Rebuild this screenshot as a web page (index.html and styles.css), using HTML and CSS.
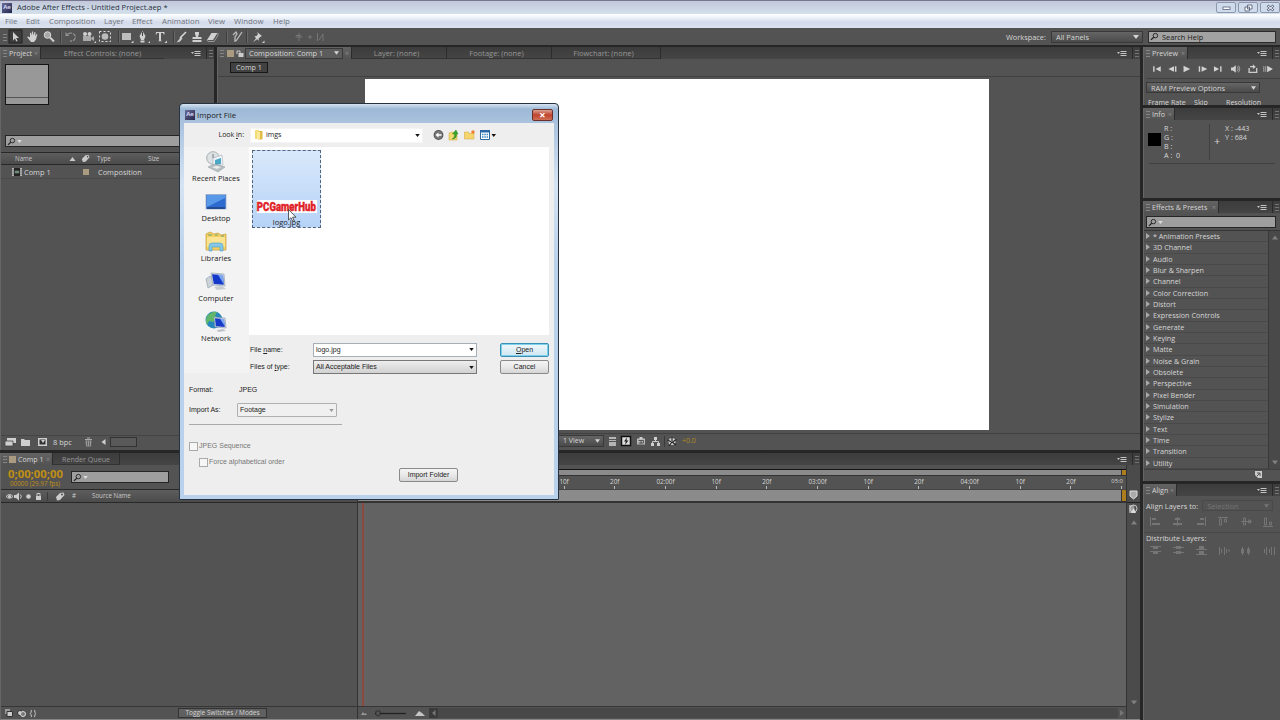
FILE: index.html
```
<!DOCTYPE html>
<html lang="en">
<head>
    <meta charset="UTF-8">
    <meta name="viewport" content="width=device-width, initial-scale=1.0">
    <title>Adobe After Effects - Untitled Project.aep *</title>
    <link rel="stylesheet" href="styles.css">
</head>
<body>
    <svg class="sprite" width="0" height="0">
        <symbol id="i-menu" viewBox="0 0 10 7"><path d="M0 2h3L1.500 4z"/><path d="M3.500 1.500h6M3.500 3.500h6M3.500 5.500h6" stroke="currentColor" stroke-width="1"/></symbol>
        <symbol id="i-search" viewBox="0 0 10 9"><circle cx="6" cy="3.500" r="2.500" fill="none" stroke="currentColor"/><path d="M4.200 5.300L1 8.300" stroke="currentColor" stroke-width="1.300"/></symbol>
        <symbol id="i-down" viewBox="0 0 6 4"><path d="M0 0h6L3 4z"/></symbol>
        <symbol id="i-up" viewBox="0 0 6 4"><path d="M0 4h6L3 0z"/></symbol>
        <symbol id="i-tag" viewBox="0 0 10 9"><path d="M1 5l4-4 3.500-.5L9.500 3 5 8 2 8.500z"/><circle cx="7.300" cy="2.500" r=".9" fill="#444"/></symbol>
        <symbol id="i-comp" viewBox="0 0 11 9"><path d="M0 0h11v9H0z" fill="#cfcfcf"/><path d="M2 0h7v9H2z" fill="#222"/><path d="M3 3h5v3H3z" fill="#6d8a78"/><path d="M1 1v7M10 1v7" stroke="#333" stroke-dasharray="1 1"/></symbol>
    </svg>

    <div class="titlebar">
        <span class="ae-icon">Ae</span>
        <span class="title">Adobe After Effects - Untitled Project.aep *</span>
        <div class="win-btns">
            <span><svg width="9" height="8" viewBox="0 0 9 8"><rect x="1" y="3" width="7" height="2.500" fill="#fff" stroke="#66708a" stroke-width=".9"/></svg></span>
            <span><svg width="9" height="8" viewBox="0 0 9 8"><path d="M3.500 1h4.500v4H3.500zM1 3h4.500v4H1z" fill="#fff" stroke="#66708a"/></svg></span>
            <span><svg width="9" height="8" viewBox="0 0 9 8"><path d="M1.500 1.500l6 5M7.500 1.500l-6 5" stroke="#66708a" stroke-width="2.600"/><path d="M2 2l5 4M7 2L2 6" stroke="#fff" stroke-width="1"/></svg></span>
        </div>
    </div>
    <div class="menubar">
        <span class="m-file">File</span><span class="m-edit">Edit</span><span class="m-comp">Composition</span><span class="m-layer">Layer</span><span class="m-effect">Effect</span><span class="m-anim">Animation</span><span class="m-view">View</span><span class="m-window">Window</span><span>Help</span>
    </div>

    <div class="toolbar">
        <i class="grip"></i>
        <svg class="tools" width="330" height="16" viewBox="0 0 330 16" fill="#d0d0d0">
            <rect x="1" y="1" width="13" height="13" fill="#3c3c3c" stroke="#232323"/>
            <path d="M5 3v8.500l2-2 1.300 3 1.200-.5-1.300-3H11z"/>
            <path d="M19 8l1.500-.5 1.500 1V4l1-.3.500 3L24 2.500h1l.3 4L26.500 3l1 .3-.3 4L28.500 5l.9.500-1.400 5L26 13h-3z"/>
            <circle cx="39.500" cy="6" r="3.300" fill="#a8a8a8" stroke="#d8d8d8"/><path d="M42 8.500l4 4" stroke="#d0d0d0" stroke-width="2"/>
            <path d="M52.500 2v12" stroke="#3d3d3d"/><path d="M53.500 2v12" stroke="#686868"/>
            <path d="M60 5a4.500 4 0 1 1 2 7" fill="none" stroke="#929292" stroke-width="1.300" stroke-dasharray="4 1"/><path d="M57.500 3v4h4z" fill="#929292"/>
            <path d="M75 7h8v5h-8zM83 9l3-2v5l-3-2z" fill="#aaa"/><circle cx="77" cy="5" r="2"/><circle cx="81.500" cy="5" r="2"/><path d="M86 14h2v-2z"/>
            <circle cx="97" cy="7.500" r="3.300" fill="#bbb"/><rect x="91.500" y="2.500" width="11" height="10" fill="none" stroke="#ddd" stroke-dasharray="2 2"/>
            <path d="M110.500 2v12" stroke="#3d3d3d"/><path d="M111.500 2v12" stroke="#686868"/>
            <path d="M114 4h9v7h-9z" fill="#bdbdbd"/><path d="M123 14h2.500v-2.500z"/>
            <path d="M134.500 2l3 5-1.500 4h-3l-1.500-4zM132.500 11.500h4v2h-4z"/><path d="M134.500 3v4" stroke="#444"/><path d="M140 14h2v-2z"/>
            <path d="M148 3h8.500v2.500h-.8L155 4h-2v7.500l1 .8h-4l1-.8V4h-2l-.5 1.500h-.8z"/><path d="M156.500 14h2.500v-2.500z"/>
            <path d="M165.500 2v12" stroke="#3d3d3d"/><path d="M166.500 2v12" stroke="#686868"/>
            <path d="M178 3l-6 6" stroke="#d8d8d8" stroke-width="1.600"/><path d="M173 8l1.500 1.500-2.500 3-3.500 1z"/>
            <path d="M187 3h4v2l-1 3h3.500v2h-9V8h3.500l-1-3zM184.500 11h9v2h-9z"/>
            <path d="M203.500 4h6l-4.500 7h-6z"/><path d="M199 11l1 1.500h6l4-6V4" fill="none" stroke="#999"/>
            <path d="M218.500 2v12" stroke="#3d3d3d"/><path d="M219.500 2v12" stroke="#686868"/>
            <path d="M234 3l-6 9M225 6l3-3 1 2-2 3v5" stroke="#bdbdbd" stroke-width="1.300" fill="none"/>
            <path d="M238.500 2v12" stroke="#3d3d3d"/><path d="M239.500 2v12" stroke="#686868"/>
            <path d="M249 3l5 4-1.500.7-2 2 .5 2-2-1.500-4 3 3-4-1.500-2 2-.2 1.500-2z"/><path d="M254 14h2.500v-2.500z"/>
            <g fill="none" stroke="#777"><path d="M291 4v8M287.500 8h7M288 6.500h5"/><path d="M300 8h4M302 6v4"/><path d="M309.500 4v8M311 11l4-6v7"/></g>
        </svg>
        <span class="ws-label">Workspace:</span>
        <span class="select ws-select">All Panels<svg width="6" height="4"><use href="#i-down"/></svg></span>
        <span class="search-help"><svg width="9" height="9"><use href="#i-search"/></svg>Search Help</span>
    </div>

    <div class="workspace">
        <div class="main">
            <div class="upper">
                <div class="panel project">
                    <div class="tabs">
                        <span class="tab active w-project"><i class="grip"></i>Project<b>×</b></span>
                        <span class="tab dim effect-controls">Effect Controls: (none)</span>
                        <svg class="pmenu" width="10" height="7"><use href="#i-menu"/></svg><i class="end"></i>
                    </div>
                    <div class="thumb"></div>
                    <div class="field project-search"><svg width="9" height="9"><use href="#i-search"/></svg><svg class="lt" width="5" height="3"><use href="#i-down"/></svg></div>
                    <div class="colhead">
                        <span class="c-name">Name</span><svg width="7" height="4"><use href="#i-up"/></svg><svg class="tag" width="9" height="9"><use href="#i-tag"/></svg><span class="c-type">Type</span><span>Size</span>
                    </div>
                    <div class="item">
                        <svg width="10" height="8"><use href="#i-comp"/></svg><span class="c-comp">Comp 1</span><i class="swatch"></i><span>Composition</span>
                    </div>
                    <div class="project-foot">
                        <svg width="110" height="12" viewBox="0 0 110 12" fill="#cfcfcf">
                            <path d="M6 2h9v5H6z"/><path d="M4 5h8v5H4z" stroke="#444" stroke-width=".8"/><path d="M20 3h3l1 1h5v6h-9z"/>
                            <path d="M37 2h9v8h-9z"/><path d="M38.500 3.500h6v5h-6z" fill="#333"/><path d="M40 4l2 3 2-3z"/>
                            <path d="M84 3.500h7M86 2h3" stroke="#aaa"/><path d="M84.500 4.500h6l-.6 6h-4.800z" fill="#999"/><path d="M86.500 5v5M88.500 5v5" stroke="#555" stroke-width=".7"/>
                            <path d="M104.500 3v6L100.500 6z"/>
                        </svg>
                        <span class="bpc">8 bpc</span><i class="thumb-bar"></i>
                    </div>
                </div>

                <div class="panel comp">
                    <div class="tabs">
                        <span class="tab active w-comp"><i class="grip"></i><i class="swatch"></i><svg width="8" height="9" viewBox="0 0 8 9"><path d="M2.500 4h5v4h-5z" fill="#ccc"/><path d="M1 5V2h3v2" fill="none" stroke="#ccc"/></svg><span class="comp-name">Composition: Comp 1<svg width="5" height="4"><use href="#i-down"/></svg></span><b>×</b></span>
                        <span class="tab dim w-layer">Layer: (none)</span>
                        <span class="tab dim w-footage">Footage: (none)</span>
                        <span class="tab dim w-flow">Flowchart: (none)</span>
                        <svg class="pmenu" width="10" height="7"><use href="#i-menu"/></svg><i class="end"></i>
                    </div>
                    <div class="crumbs"><span>Comp 1</span></div>
                    <div class="viewer"><div class="canvas"></div></div>
                    <div class="comp-foot">
                        <span class="select views">1 View<svg width="5" height="4"><use href="#i-down"/></svg></span>
                        <svg width="78" height="13" viewBox="0 0 78 13" fill="#cfcfcf">
                            <path d="M5 2h7v2H5zM5 5h7v1H5zM5 7h7v4H5z" fill="#b5b5b5"/>
                            <rect x="17.500" y="1.500" width="9" height="9" fill="#ddd" stroke="#111" stroke-width="1.500"/><path d="M23 2.500L20 6.500h1.800L21 10l3.500-4.500h-2z" fill="#222"/>
                            <path d="M33 3.500h8v6h-8z" fill="#bbb"/><path d="M35.500 2h3v2h-3z"/><path d="M34.500 5.500h5v2.500h-5M37 5v4" stroke="#555" fill="none"/>
                            <path d="M50 2h3v3h-3zM47 8h3v3h-3zM53 8h3v3h-3z"/><path d="M51.500 5v2M48.500 8V6.500h6V8" stroke="#ccc" fill="none"/>
                            <path d="M60.500 1v11" stroke="#3a3a3a"/>
                            <circle cx="68" cy="6.500" r="3.500"/><path d="M68 2v4M72.500 4.500L68.500 7M72 10l-4-3M65 11l3-4M63.500 5l4 2" stroke="#222" stroke-width="1.100"/>
                        </svg>
                        <span class="exposure">+0.0</span>
                    </div>
                </div>
            </div>

            <div class="panel timeline">
                <div class="tabs">
                    <span class="tab active w-tl"><i class="grip"></i><i class="swatch"></i>Comp 1<b>×</b></span>
                    <span class="tab dim w-rq">Render Queue</span>
                    <svg class="pmenu" width="10" height="7"><use href="#i-menu"/></svg><i class="end"></i>
                </div>
                <div class="tl-body">
                    <div class="tl-left">
                        <div class="tl-top">
                            <div class="timecode"><b>0;00;00;00</b><span>00000 (29.97 fps)</span></div>
                            <div class="field tl-search"><svg width="9" height="9"><use href="#i-search"/></svg><svg class="lt" width="5" height="3"><use href="#i-down"/></svg></div>
                        </div>
                        <div class="colhead tl-head">
                            <svg width="78" height="11" viewBox="0 0 78 11" fill="#ccc">
                                <path d="M5 5.500q3.500-4 7 0q-3.500 3.500-7 0" stroke="#ccc" fill="none"/><circle cx="8.500" cy="5.500" r="1.600"/>
                                <path d="M13 4h2l3-2.500v8L15 7h-2z"/><path d="M19.500 3.500q1.500 2 0 4" stroke="#ccc" fill="none"/>
                                <circle cx="27.500" cy="5.500" r="2.300"/><path d="M35 5h5v4h-5z"/><path d="M36 5V2.500h3V5" stroke="#ccc" fill="none"/>
                                <path d="M46.500 1v9" stroke="#3b3b3b"/><path d="M55 6l4-4 3.500-.5L63.500 4 59 9l-3 .5z"/><circle cx="61" cy="3.500" r=".9" fill="#444"/>
                            </svg>
                            <span class="c-num">#</span><span>Source Name</span>
                        </div>
                        <div class="tl-layers"></div>
                        <div class="tl-lfoot">
                            <svg width="40" height="11" viewBox="0 0 40 11" fill="#ccc"><path d="M4 1h5v5H4z" fill="#999"/><path d="M6 3.500h5.500v5H6z" stroke="#333"/><circle cx="19" cy="5" r="2.500" fill="#ccc" stroke="#333"/><circle cx="22" cy="6" r="2.500" fill="#777" stroke="#ddd"/><path d="M31 2q-1 0-1 2.500l-.7 1 .7 1q0 2.500 1 2.500M33 2q1 0 1 2.500l.7 1-.7 1q0 2.500-1 2.500" fill="none" stroke="#ccc"/></svg>
                            <span class="toggle">Toggle Switches / Modes</span>
                        </div>
                    </div>
                    <div class="tl-right">
                        <div class="nav-bar"><i></i></div>
                        <div class="ruler"><span>0:00f</span><span>10f</span><span>20f</span><span>01:00f</span><span>10f</span><span>20f</span><span>02:00f</span><span>10f</span><span>20f</span><span>03:00f</span><span>10f</span><span>20f</span><span>04:00f</span><span>10f</span><span>20f</span><span class="last">05:0</span></div>
                        <div class="work-bar"><i></i></div>
                        <div class="tracks"><i class="playhead"></i></div>
                        <div class="tl-rfoot">
                            <svg width="80" height="10" viewBox="0 0 80 10" fill="#c5c5c5"><path d="M3 7l2-3 1.500 2L7.500 5l1.500 2z" fill="#999"/><path d="M17 5.500h31" stroke="#222" stroke-width="1.300"/><path d="M18 3h4v4l-2 1-2-1z" fill="#555" stroke="#222" stroke-width=".7"/><path d="M57 8l4-5 3 2 3 3z"/><path d="M71 0v10h9V0z" fill="#3b3b3b"/><path d="M77.500 2v6L74 5z" fill="#777"/></svg>
                            <i></i>
                            <svg width="8" height="10" viewBox="0 0 8 10"><path d="M2 2v6l4-3z" fill="#777"/></svg>
                        </div>
                    </div>
                    <div class="tl-scroll">
                        <svg width="13" height="55" viewBox="0 0 13 55"><path d="M3 26h7v5l-3.500 3L3 31z" fill="#aaa" stroke="#ddd"/><path d="M0 37.500h13" stroke="#222"/><path d="M2 40h5l1 8H2z" fill="#999"/><circle cx="6.500" cy="43.500" r="3.500" fill="none" stroke="#ccc"/><path d="M4 48l2.500-5L9 48z" fill="#ddd"/></svg>
                        <svg class="gray" width="6" height="5"><use href="#i-up"/></svg>
                        <svg class="gray bottom" width="6" height="5"><use href="#i-down"/></svg>
                    </div>
                </div>
            </div>
        </div>

        <div class="side">
            <div class="panel preview">
                <div class="tabs"><span class="tab active w-prev"><i class="grip"></i>Preview<b>×</b></span><svg class="pmenu" width="10" height="7"><use href="#i-menu"/></svg><i class="end"></i></div>
                <svg class="transport" width="134" height="20" viewBox="0 0 134 20" fill="#d2d2d2">
                    <path d="M4 7.500h1.500v6H4zM12 7.500v6l-5.500-3zM26 7.500v6l-6-3zM27 7.500h1.500v6H27zM36 7v7l7-3.500zM52 7.500h1.500v6H52zM55 7.500v6l6-3zM68 7.500v6l5.500-3zM74.500 7.500H76v6h-1.500z"/>
                    <path d="M86 9h2l3-2.500v8L88 12h-2z"/><path d="M92.500 8q2 2.500 0 5M94 7q2.500 3.500 0 7" stroke="#bbb" fill="none" stroke-width=".8"/>
                    <path d="M105 9.500V14h8V9.500M106 8h4" fill="none" stroke="#ccc" stroke-width="1.400"/><path d="M109 5.500l3 3-3 2z"/>
                    <path d="M120.500 7.500v6M122.500 7.500v6" stroke="#aaa"/><path d="M124 7v7l6-3.500z"/>
                </svg>
                <div class="select ram">RAM Preview Options<svg width="5" height="4"><use href="#i-down"/></svg></div>
                <div class="cut"><span class="c-rate">Frame Rate</span><span class="c-skip">Skip</span><span>Resolution</span></div>
            </div>
            <div class="panel info">
                <div class="tabs"><span class="tab active w-info"><i class="grip"></i>Info<b>×</b></span><svg class="pmenu" width="10" height="7"><use href="#i-menu"/></svg><i class="end"></i></div>
                <div class="info-body">
                    <i class="black"></i>
                    <div class="rgba"><span>R :</span><span>G :</span><span>B :</span><span>A :&nbsp; 0</span></div>
                    <div class="cross">+</div>
                    <div class="xy"><span>X : -443</span><span>Y : 684</span></div>
                </div>
            </div>
            <div class="panel effects">
                <div class="tabs"><span class="tab active w-fx"><i class="grip"></i>Effects &amp; Presets<b>×</b></span><svg class="pmenu" width="10" height="7"><use href="#i-menu"/></svg><i class="end"></i></div>
                <div class="field fx-search"><svg width="9" height="9"><use href="#i-search"/></svg><svg class="lt" width="5" height="3"><use href="#i-down"/></svg></div>
                <div class="fx-body">
                    <ul>
                        <li>* Animation Presets</li><li>3D Channel</li><li>Audio</li><li>Blur &amp; Sharpen</li><li>Channel</li><li>Color Correction</li><li>Distort</li><li>Expression Controls</li><li>Generate</li><li>Keying</li><li>Matte</li><li>Noise &amp; Grain</li><li>Obsolete</li><li>Perspective</li><li>Pixel Bender</li><li>Simulation</li><li>Stylize</li><li>Text</li><li>Time</li><li>Transition</li><li>Utility</li>
                    </ul>
                    <div class="fx-scroll"><svg class="gray" width="6" height="5"><use href="#i-up"/></svg><svg class="gray" width="6" height="5"><use href="#i-down"/></svg></div>
                </div>
                <div class="fx-foot"><svg width="7" height="7" viewBox="0 0 7 7"><path d="M0 0h7v7H3L0 4z" fill="#ccc"/><path d="M2 2h3v3M5 2L2 5" stroke="#555" fill="none"/></svg></div>
            </div>
            <div class="panel align">
                <div class="tabs"><span class="tab active w-align"><i class="grip"></i>Align<b>×</b></span><svg class="pmenu" width="10" height="7"><use href="#i-menu"/></svg><i class="end"></i></div>
                <div class="align-row"><span>Align Layers to:</span><span class="select sel">Selection<svg width="5" height="4"><use href="#i-down"/></svg></span></div>
                <svg width="134" height="20" viewBox="0 0 134 20" fill="#757575" stroke="#757575">
                    <path d="M6.500 5v9M33.500 5v9M61.500 5v9M74 5.500h10M97 9.500h11M119 14.500h10" fill="none"/>
                    <path d="M8 6h4v2H8zM8 11h8v2H8zM31 6h5v2h-5zM29 11h9v2h-9zM56 6h4v2h-4zM53 11h7v2h-7z" stroke="none"/>
                    <path d="M75.500 7v6h2V7zM80.500 7v3h2V7zM99.500 6v7h2V6zM104.500 8v3h2V8zM120.500 6v7h2V6zM125.500 10v3h2v-3z" fill="none"/>
                </svg>
                <div class="align-row dist"><span>Distribute Layers:</span></div>
                <svg width="134" height="16" viewBox="0 0 134 16" fill="#757575" stroke="#757575">
                    <path d="M6 3.500h11M6 8.500h11M29 4.500h11M29 9.500h11M52 6.500h11M52 11.500h11"/>
                    <path d="M9 4h5v2H9zM9 9h5v2H9zM32 3h5v3h-5zM32 8h5v3h-5zM55 3h5v3h-5zM55 8h5v3h-5z" stroke="none"/>
                    <path d="M75.500 4v8M80.500 4v8M77.500 6v4M82.500 6v4M85 6v3M98.500 4v8M97.500 6h2v4h-2zM104.500 4v8M103.500 6h2v4h-2zM122.500 4v8M127.500 4v8M120.500 6v4M125.500 6v4M130.500 4v8" fill="none"/>
                </svg>
            </div>
        </div>
    </div>

    <div class="dialog">
        <div class="dlg-title"><span class="ae-icon">Ae</span><span>Import File</span><b class="close">×</b></div>
        <div class="dlg-body">
            <div class="lookin">
                <label>Look <u>i</u>n:</label>
                <div class="combo look-combo"><svg width="9" height="10" viewBox="0 0 9 10"><path d="M1 0h4v9H1z" fill="#f4dd79"/><path d="M4 1h4.500v8.500H4z" fill="#e3bc45"/><path d="M3 1l3 1v8L3 9z" fill="#fae998"/></svg>imgs<svg class="arrow" width="5" height="3"><use href="#i-down"/></svg></div>
                <svg width="70" height="14" viewBox="0 0 70 14">
                    <circle cx="10.500" cy="7" r="4.900" fill="#555"/><circle cx="10.500" cy="7" r="3.900" fill="#777"/><path d="M13.500 6.200v1.600h-3v1.700L7.500 7l3-2.500v1.700z" fill="#fff"/>
                    <path d="M21 5l3-1 5 1v7h-8z" fill="#f2d872" stroke="#c9a437" stroke-width=".5"/><path d="M24 11q3-1 2.500-5h-2L28 2l2 4h-1.500q.5 5-4.500 5" fill="#36a52b" stroke="#1d7a1c" stroke-width=".4"/>
                    <path d="M36.500 4h4l1 1.500h4.500V11h-9.500z" fill="#f6d56e" stroke="#cfa43b" stroke-width=".5"/><circle cx="45" cy="4" r="1.800" fill="#ef8335"/>
                    <path d="M52.500 2.500h9v9h-9z" fill="#fff" stroke="#2b6aa0"/><path d="M52 2h10v2.500H52z" fill="#2867a8"/><path d="M54 6.500h6M54 9h6" stroke="#3586c4" stroke-width="1.500" stroke-dasharray="1.500 .8"/><path d="M63.500 6h4.500L65.700 9z" fill="#111"/>
                </svg>
            </div>
            <div class="browse">
                <div class="places">
                    <div><svg width="24" height="23" viewBox="0 0 24 23"><circle cx="9" cy="8" r="6.300" fill="#dde2e4" stroke="#a9b0b3"/><path d="M9 4v4h3" fill="none" stroke="#777"/><path d="M9 8l9-3 1 10H9z" fill="#eef6fa" stroke="#aab" stroke-width=".6"/><path d="M11 10l6-2v6l-6 1z" fill="#4ba7c6"/><path d="M4 17l7-3 10 3-7 5z" fill="#b9c0c4" stroke="#899" stroke-width=".5"/><path d="M8 17l5-1 4 1-4 2z" fill="#eee"/></svg>Recent Places</div>
                    <div><svg width="24" height="23" viewBox="0 0 24 23"><rect x="2" y="4.500" width="20" height="14.500" fill="#2d6bd0" stroke="#9eb0c8" stroke-width=".8"/><path d="M3 5h18v3L3 17z" fill="#5898e8"/><path d="M3 17h18v2H3z" fill="#244b93"/></svg>Desktop</div>
                    <div><svg width="24" height="23" viewBox="0 0 24 23"><path d="M2 4l4-2 4 2 4-1 3 2 5-1v16H2z" fill="#f2cf65" stroke="#c79d33" stroke-width=".7"/><path d="M3 7h18v10H3z" fill="#fae493"/><path d="M4 5h4M11 5h3M17 6h3" stroke="#6ca36d"/><path d="M5 21v-5q0-3 3-3h8q3 0 3 3v5h-3v-4H8v4z" fill="#85c8e4" stroke="#4ba0c9" stroke-width=".6"/></svg>Libraries</div>
                    <div><svg width="24" height="23" viewBox="0 0 24 23"><path d="M2 9l4-3 5 8-7 4z" fill="#cbd2d8" stroke="#8c98a2" stroke-width=".6"/><path d="M7 3l13 1 1 12-12-1z" fill="#dfe6ed" stroke="#8793a0" stroke-width=".6"/><path d="M8 4.200l11 .9.8 9.700-10-.8z" fill="#1438ca"/><path d="M14 4.700l5 .4.600 9z" fill="#7aa7ef"/><path d="M10 17l8-1 4 3-9 1z" fill="#c6cdd3"/></svg>Computer</div>
                    <div><svg width="24" height="23" viewBox="0 0 24 23"><circle cx="10" cy="10" r="8.500" fill="#2688bd"/><path d="M3 6q5-5 10-4l-2 4 2 2-4 4-4-1-2 4q-2-4 0-9" fill="#61b66c"/><path d="M10 7l11 1 1 10-11-1z" fill="#dde7ee" stroke="#8190a0" stroke-width=".6"/><path d="M11 8.200l9 .8.800 8-9-.8z" fill="#163bc8"/><path d="M16 8.700l4 .3.600 7z" fill="#83aaee"/><path d="M13 20l6-1 3 2-8 1z" fill="#bcc4cb"/></svg>Network</div>
                </div>
                <div class="right-col">
                    <div class="files">
                        <div class="file"><span class="logo"><b>PCGamerHub</b></span><span>logo.jpg</span></div>
                    </div>
                    <div class="frow"><label>File <u>n</u>ame:</label><div class="combo name-combo">logo.jpg<svg class="arrow" width="5" height="3"><use href="#i-down"/></svg></div><button class="btn default"><u>O</u>pen</button></div>
                    <div class="frow"><label>Files of <u>t</u>ype:</label><div class="combo type-combo">All Acceptable Files<svg class="arrow" width="5" height="3"><use href="#i-down"/></svg></div><button class="btn">Cancel</button></div>
                </div>
            </div>
            <div class="opts">
                <div class="orow"><label>Format:</label><span>JPEG</span></div>
                <div class="orow"><label>Import As:</label><div class="combo as-combo">Footage<svg class="arrow" width="5" height="3"><use href="#i-down"/></svg></div></div>
                <div class="rule"></div>
                <div class="check"><i></i>JPEG Sequence</div>
                <div class="check sub"><i></i>Force alphabetical order</div>
                <button class="btn folder">Import Folder</button>
            </div>
        </div>
        <svg class="cursor" width="9" height="13" viewBox="0 0 9 13"><path d="M.5.500v10.500l2.500-2.300 1.800 4 1.500-.7-1.700-3.800H8z" fill="#fff" stroke="#333" stroke-width=".8"/></svg>
    </div>
</body>
</html>
```
FILE: styles.css
```
* {
    box-sizing: border-box;
}

body {
    margin: 0;
    width: 1280px;
    height: 720px;
    overflow: hidden;
    display: flex;
    flex-direction: column;
    background: #262626;
    color: #d6d6d6;
    font-family: "Open Sans", sans-serif;
    font-size: 7.4px;
    line-height: 10px;
    white-space: nowrap;
    position: relative;
}

svg {
    flex: none;
    display: block;
}

svg:not([fill]) {
    fill: currentColor;
}

i, b {
    font-style: normal;
    flex: none;
}

.sprite {
    position: absolute;
}

/* window chrome */
.titlebar {
    height: 14px;
    flex: none;
    display: flex;
    align-items: center;
    padding-left: 2px;
    border-top: 1px solid #77778f;
    background: linear-gradient(#c2c8da, #d3e0ec);
    color: #27303c;
    font-size: 7.6px;
}

.ae-icon {
    width: 10px;
    height: 10px;
    background: linear-gradient(135deg, #6a6c98, #25264c);
    color: #d4d7f4;
    font-size: 6px;
    font-weight: bold;
    text-align: center;
    line-height: 9px;
}

.title {
    margin-left: 5px;
    margin-top: -1px;
}

.win-btns {
    margin-left: auto;
    display: flex;
    gap: 2px;
}

.win-btns span {
    width: 20px;
    height: 11px;
    border: 1px solid #8b98b0;
    border-radius: 2px;
    display: flex;
    align-items: center;
    justify-content: center;
    background: #cfdaea;
}

.menubar {
    height: 14px;
    flex: none;
    display: flex;
    align-items: center;
    padding-left: 5px;
    background: linear-gradient(#fff 0, #eef3fa 25%, #d3daea 60%, #dde2ef);
    color: #70747c;
    font-size: 7.8px;
}

.m-file { width: 21px; }
.m-edit { width: 23px; }
.m-comp { width: 55px; }
.m-layer { width: 28px; }
.m-effect { width: 30px; }
.m-anim { width: 46px; }
.m-view { width: 26px; }
.m-window { width: 39px; }

.toolbar {
    height: 17px;
    flex: none;
    display: flex;
    align-items: center;
    background: #535353;
    padding: 0 4px 0 3px;
}

.tools {
    margin-left: 1px;
}

.grip {
    width: 4px;
    height: 8px;
    background: radial-gradient(circle, #858585 0.7px, transparent 0.8px) 0 0 / 2px 3px;
}

.ws-label {
    margin-left: auto;
    width: 45px;
}

.select {
    display: flex;
    align-items: center;
    justify-content: space-between;
    background: linear-gradient(#656565, #4b4b4b);
    border: 1px solid #393939;
    padding: 0 3px 0 4px;
}

.ws-select {
    width: 92px;
    height: 12px;
}

.search-help {
    width: 128px;
    height: 12px;
    margin-left: 5px;
    display: flex;
    align-items: center;
    gap: 3px;
    padding-left: 1px;
    background: #a2a2a2;
    border: 1px solid #2b2b2b;
    color: #1d1d1d;
}

/* panels */
.workspace {
    flex: 1;
    display: flex;
    gap: 3px;
    padding-top: 2px;
    min-height: 0;
}

.main {
    width: 1140px;
    display: flex;
    flex-direction: column;
    gap: 3px;
}

.upper {
    height: 403px;
    display: flex;
    gap: 3px;
}

.panel {
    background: #535353;
    overflow: hidden;
    display: flex;
    flex-direction: column;
    border-left: 1px solid #666;
    flex: none;
}

.tabs {
    height: 12px;
    flex: none;
    display: flex;
    align-items: stretch;
    background: linear-gradient(#3c3c3c, #454545);
}

.tab {
    display: flex;
    align-items: center;
    padding-left: 2px;
    border-right: 1px solid #2c2c2c;
    border-bottom: 1px solid #333;
}

.tab.active {
    background: linear-gradient(#636363, #535353);
    border-bottom: 0;
    font-size: 7.1px;
}

.tab.dim {
    color: #969696;
    justify-content: center;
    padding: 0;
    font-size: 7.5px;
}

.tab b {
    margin-left: auto;
    font-weight: normal;
    color: #8b8b8b;
    padding-right: 2px;
}

.tab .grip {
    margin-right: 2px;
}

.pmenu {
    margin: 3px 5px 0 auto;
    color: #c4c4c4;
}

.end {
    width: 8px;
    padding: 2px;
    border-left: 1px solid #2a2a2a;
}

.end::before {
    content: "";
    display: block;
    width: 4px;
    height: 8px;
    background: radial-gradient(circle, #757575 0.7px, transparent 0.8px) 0 0 / 2px 3px;
}

.swatch {
    width: 7px;
    height: 7px;
    background: #aa9a80;
}

.project { width: 214px; }
.comp { width: 923px; }
.w-project { width: 40px; }
.tab.effect-controls { width: 123px; border-right: 0; }

.thumb {
    width: 44px;
    height: 41px;
    margin: 5px 0 0 4px;
    border: 1px solid #141414;
    background: linear-gradient(#989898 32px, #555 32px, #555 33px, #989898 33px);
    flex: none;
}

.field {
    display: flex;
    align-items: center;
    gap: 1px;
    height: 12px;
    flex: none;
    padding-left: 1px;
    background: #9e9e9e;
    border: 1px solid #252525;
    color: #222;
}

.field .lt {
    color: #ddd;
}

.project-search {
    margin: 30px 4px 5px;
}

.colhead {
    height: 13px;
    flex: none;
    display: flex;
    align-items: center;
    background: linear-gradient(#5d5d5d, #4b4b4b);
    border-top: 1px solid #282828;
    border-bottom: 1px solid #282828;
    font-size: 6.2px;
    padding-left: 14px;
    color: #c9c9c9;
}

.c-name { width: 54px; }
.colhead .tag { margin: 0 7px 0 5px; }
.c-type { width: 51px; }

.item {
    display: flex;
    align-items: center;
    height: 14px;
    padding-left: 11px;
    border-bottom: 1px solid #494949;
}

.c-comp {
    width: 59px;
    margin-left: 2px;
}

.item .swatch { margin-right: 9px; width: 6px; height: 6px; }

.project-foot {
    margin-top: auto;
    height: 15px;
    padding-bottom: 2px;
    display: flex;
    align-items: center;
    border-top: 1px solid #444;
}

.bpc {
    margin-left: -58px;
}

.thumb-bar {
    width: 27px;
    height: 10px;
    margin-left: 38px;
    background: #595959;
    border: 1px solid #333;
}

.w-comp { width: 134px; gap: 1px; }
.w-comp svg { margin-left: 1px; }

.comp-name {
    display: flex;
    align-items: center;
    justify-content: space-between;
    width: 98px;
    height: 11px;
    padding: 0 3px;
    border: 1px solid #393939;
    background: #5c5c5c;
    font-size: 7.4px;
}

.w-layer,
.w-footage,
.w-flow {
    text-indent: -5px;
}

.w-layer { width: 95px; }
.w-footage { width: 105px; }
.w-flow { width: 109px; }

.crumbs {
    height: 18px;
    flex: none;
    padding: 3px 0 0 12px;
    border-bottom: 1px solid #404040;
    font-size: 7.2px;
}

.crumbs span {
    display: block;
    width: 38px;
    height: 11px;
    border: 1px solid #181818;
    background: #414141;
    text-align: center;
    line-height: 9px;
}

.viewer {
    height: 356px;
    padding: 2px 0 0 147px;
    flex: none;
}

.canvas {
    width: 624px;
    height: 351px;
    background: #fff;
}

.comp-foot {
    flex: 1;
    border-top: 1px solid #404040;
    display: flex;
    align-items: center;
    padding: 0 0 2px 338px;
    font-size: 7px;
}

.views {
    width: 48px;
    height: 12px;
    padding-left: 6px;
}

.exposure {
    color: #b38d20;
}

/* timeline */
.timeline {
    height: 267px;
    border-bottom: 1px solid #858585;
}

.w-tl { width: 52px; }
.w-tl .swatch { margin-right: 2px; }
.tab.w-rq { width: 67px; font-size: 7.1px; }

.tl-body {
    flex: 1;
    display: flex;
}

.tl-left {
    width: 357px;
    display: flex;
    flex-direction: column;
    border-right: 1px solid #333;
}

.tl-top {
    height: 24px;
    display: flex;
    padding: 3px 0 0 7px;
}

.timecode {
    width: 63px;
    display: flex;
    flex-direction: column;
    color: #c08f13;
    font-size: 6.3px;
    line-height: 9px;
}

.timecode b {
    font-size: 11.3px;
    line-height: 11px;
}

.timecode span {
    margin-left: 2px;
}

.tl-search {
    width: 98px;
    margin-top: 3px;
}

.tl-head { padding: 0; height: 14px; }
.c-num { width: 14px; margin-left: -7px; }
.tl-head span:last-child { margin-left: 6px; }
.tl-layers { flex: 1; }

.tl-lfoot {
    height: 13px;
    border-top: 1px solid #363636;
    display: flex;
    align-items: center;
}

.toggle {
    width: 89px;
    height: 10px;
    margin-left: 137px;
    text-align: center;
    line-height: 8px;
    font-size: 6.5px;
    border: 1px solid #333;
    background: #606060;
}

.tl-right {
    width: 769px;
    display: flex;
    flex-direction: column;
    padding-top: 4px;
    overflow: hidden;
}

.nav-bar,
.work-bar {
    height: 7px;
    background: #8b8b8b;
    border-top: 1px solid #151515;
    border-bottom: 1px solid #333;
    display: flex;
    justify-content: flex-end;
}

.nav-bar i,
.work-bar i {
    width: 5px;
    background: #ac7d1c;
    border-left: 1px solid #333;
}

.work-bar {
    height: 14px;
    border-top-color: #454545;
    border-bottom: 2px solid #333;
}

.ruler {
    height: 13px;
    display: flex;
    justify-content: flex-end;
    padding-top: 1px;
    margin-right: -21px;
    font-size: 6.3px;
    line-height: 9px;
}

.ruler span {
    width: 50.7px;
    flex: none;
    text-align: center;
    background: linear-gradient(#bbb, #bbb) 50% 9px / 1px 3px no-repeat;
}

.ruler .last {
    text-align: left;
    padding-left: 15px;
    font-size: 5.8px;
}

.tracks {
    flex: 1;
    background: #626262;
    padding-left: 4px;
}

.playhead {
    display: block;
    width: 2px;
    height: 100%;
    background: #8a4a40;
}

.tl-rfoot {
    height: 13px;
    display: flex;
    align-items: center;
    border-top: 1px solid #363636;
}

.tl-rfoot i {
    flex: 1;
    height: 10px;
    background: #484848;
}

.tl-scroll {
    flex: 1;
    background: #4b4b4b;
    border-left: 1px solid #333;
    display: flex;
    flex-direction: column;
    align-items: center;
}

.gray {
    color: #808080;
}

.tl-scroll .bottom {
    margin: auto 0 14px;
}

/* right side */
.side {
    width: 137px;
    display: flex;
    flex-direction: column;
    gap: 3px;
}

.w-prev { width: 44px; }
.w-info { width: 31px; }
.w-fx { width: 75px; }
.w-align { width: 33px; }
.preview { height: 58px; }
.info { height: 90px; }
.effects { height: 280px; }
.align { flex: 1; }

.transport {
    border-bottom: 1px solid #404040;
    margin-left: 2px;
}

.ram {
    margin: 3px 0 0 2px;
    width: 114px;
    height: 11px;
    flex: none;
}

.cut {
    display: flex;
    padding: 4px 0 0 4px;
    flex: none;
    font-size: 7.1px;
}

.c-rate { width: 46px; }
.c-skip { width: 32px; }

.info-body {
    display: flex;
    margin: 4px 5px 0;
    height: 40px;
    line-height: 9px;
    font-size: 7.2px;
    border-bottom: 1px solid #404040;
}

.black {
    width: 13px;
    height: 13px;
    margin: 9px 3px 0 -1px;
    background: #000;
}

.rgba,
.xy {
    display: flex;
    flex-direction: column;
}

.rgba {
    width: 46px;
    height: 36px;
    border-right: 1px solid #404040;
}

.cross {
    padding: 13px 0 0 4px;
    width: 15px;
    font-size: 11px;
    line-height: 8px;
}

.fx-search {
    margin: 3px 4px 2px 2px;
}

.fx-body {
    display: flex;
    border-top: 1px solid #353535;
}

ul {
    list-style: none;
    margin: 0;
    padding: 0;
    width: 124px;
    font-size: 7.2px;
    line-height: 10.34px;
}

li {
    height: 11.34px;
    padding-left: 2px;
    border-bottom: 1px solid #494949;
    display: flex;
    align-items: center;
}

li::before {
    content: "";
    border: 3px solid transparent;
    border-left: 4px solid #a8a8a8;
    border-right: 0;
    margin-right: 3px;
}

.fx-scroll {
    flex: 1;
    background: #494949;
    border-left: 1px solid #393939;
    display: flex;
    flex-direction: column;
    align-items: center;
    justify-content: space-between;
    padding: 4px 0;
}

.fx-foot {
    flex: 1;
    border-top: 1px solid #404040;
    padding: 1px 0 0 111px;
}

.align-row {
    display: flex;
    align-items: center;
    height: 13px;
    padding-left: 2px;
    margin-top: 3px;
    flex: none;
}

.sel {
    width: 71px;
    height: 11px;
    margin-left: 4px;
    background: none;
    color: #757575;
    border-color: #494949;
}

.dist {
    border-top: 1px solid #494949;
    margin: 0;
    height: 11px;
}

/* import dialog, floats over the panels */
.dialog {
    position: absolute;
    left: 179px;
    top: 103px;
    width: 380px;
    height: 397px;
    padding: 0 4px 4px;
    border: 1px solid #26323f;
    border-radius: 4px 4px 1px 1px;
    background: linear-gradient(#d6e3f1, #9db9d6 5px, #abc3de 20px, #d5e4f3 80px, #b9d1ea 160px);
    color: #222;
    display: flex;
    flex-direction: column;
}

.dlg-title {
    height: 19px;
    flex: none;
    display: flex;
    align-items: center;
    gap: 2px;
    padding: 3px 1px 0;
    font-size: 7.8px;
}

.close {
    margin: -1px 0 0 auto;
    width: 21px;
    height: 12px;
    border: 1px solid #6b3027;
    border-radius: 2px;
    background: linear-gradient(#dba194, #c0432d 50%, #cf7058);
    color: #fff;
    font-size: 11px;
    line-height: 9px;
    text-align: center;
}

.dlg-body {
    flex: 1;
    background: #eee;
    display: flex;
    flex-direction: column;
    font-family: "Liberation Sans", Arial, sans-serif;
    font-size: 7px;
}

.lookin {
    height: 24px;
    display: flex;
    align-items: center;
    font-family: "Open Sans", sans-serif;
}

.lookin label {
    width: 60px;
    text-align: right;
    margin-right: 6px;
}

.combo {
    display: flex;
    align-items: center;
    height: 14px;
    padding: 0 2px;
    background: #fff;
    border: 1px solid #a5afb8;
}

.arrow {
    margin-left: auto;
    color: #111;
}

.look-combo {
    width: 173px;
    height: 15px;
    gap: 3px;
    padding-left: 3px;
    border-color: #f4f4f4;
}

.lookin > svg {
    margin-left: 5px;
}

.browse {
    display: flex;
    height: 229px;
}

.places {
    width: 65px;
    height: 226px;
    padding: 3px 1px 0 0;
    background: #f3f3f3;
    font-family: "Open Sans", sans-serif;
    font-size: 7.5px;
}

.places div {
    height: 40px;
    display: flex;
    flex-direction: column;
    align-items: center;
}

.files {
    width: 300px;
    height: 188px;
    padding: 3px;
    background: #fff;
    margin-bottom: 6px;
}

.file {
    width: 69px;
    height: 78px;
    border: 1px dashed #53657d;
    background: linear-gradient(#d9e8fb, #b6d3f7);
    display: flex;
    flex-direction: column;
    align-items: center;
    justify-content: flex-end;
    font-family: "Open Sans", sans-serif;
    font-size: 7.5px;
}

.logo {
    width: 60px;
    height: 13px;
    margin-bottom: 4px;
    background: #fff;
    color: #e02228;
    font-family: Roboto, sans-serif;
    font-size: 12.5px;
    line-height: 13px;
    display: flex;
    justify-content: center;
}

.logo b {
    font-weight: 900;
    -webkit-text-stroke: 0.4px #e02228;
    transform: scaleX(0.77);
}

.frow {
    display: flex;
    align-items: center;
    height: 17.5px;
}

.frow label {
    width: 62px;
    padding-left: 1px;
}

.frow .combo {
    width: 164px;
    margin-left: 2px;
}

.type-combo {
    background: linear-gradient(#eee, #d1d1d1);
    border-color: #777;
}

.btn {
    width: 49px;
    height: 14px;
    margin-left: 23px;
    padding: 0;
    border: 1px solid #8a8a8a;
    border-radius: 2px;
    background: linear-gradient(#f4f4f4, #e9e9e9 50%, #d5d5d5);
    color: #222;
    font: inherit;
    line-height: 10px;
}

.btn.default {
    border-color: #3a8fb5;
    background: linear-gradient(#f0f8fb, #cfe6f1);
    box-shadow: inset 0 0 0 1px #7fd2ec;
}

.opts {
    padding: 2px 0 0 5px;
}

.orow {
    height: 20.5px;
    display: flex;
    align-items: center;
    padding-top: 3px;
}

.orow label {
    width: 48px;
}

.orow span {
    margin-left: 2px;
}

.as-combo {
    width: 100px;
    background: #f0f0f0;
    border-color: #b0b0b0;
    border-radius: 1px;
}

.as-combo .arrow {
    color: #999;
}

.rule {
    width: 153px;
    height: 6px;
    border-bottom: 1px solid #aaa;
}

.check {
    height: 16px;
    margin-top: 13px;
    display: flex;
    align-items: center;
    gap: 1px;
    color: #777;
}

.check i {
    width: 9px;
    height: 9px;
    border: 1px solid #aaa;
    background: #f6f6f6;
}

.check.sub {
    margin: 0 0 0 10px;
}

.folder {
    width: 59px;
    margin: -2px 0 0 210px;
    display: block;
}

.cursor {
    position: absolute;
    left: 108px;
    top: 105px;
}
```
